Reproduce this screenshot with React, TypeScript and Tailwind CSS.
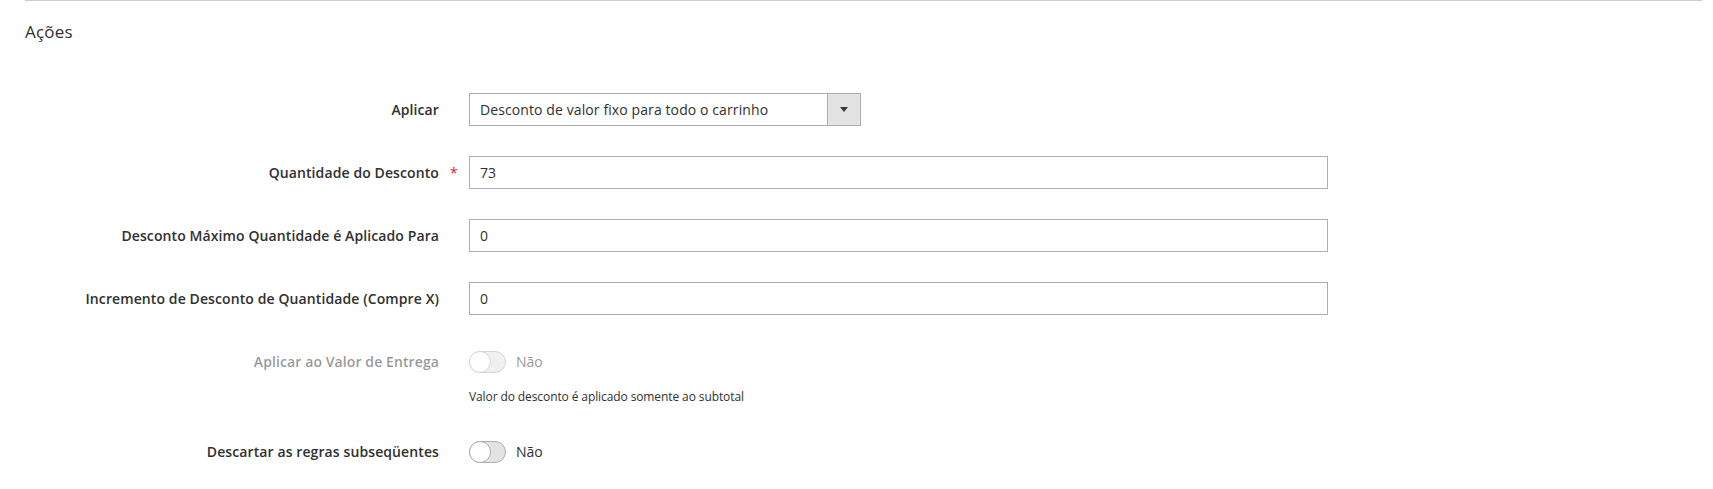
import React from "react";

function Toggle({ disabled }: { disabled?: boolean }) {
  return (
    <div className={`flex items-center gap-[10px] ${disabled ? "opacity-50" : ""}`}>
      <div className="relative h-[22px] w-[37px] rounded-full border border-[#adadad] bg-[#e3e3e3]">
        <div className="absolute -left-px -top-px h-[22px] w-[22px] rounded-full border border-[#adadad] bg-white" />
      </div>
      <span className="text-[14px] text-[#303030]">Não</span>
    </div>
  );
}

function Row({
  label,
  required,
  disabled,
  children,
}: {
  label: string;
  required?: boolean;
  disabled?: boolean;
  children: React.ReactNode;
}) {
  return (
    <div className="flex h-[33px] items-center">
      <div
        className={`w-[414px] text-right text-[14px] font-semibold tracking-[0.1px] ${
          disabled ? "text-[#303030]/50" : "text-[#303030]"
        }`}
      >
        {label}
      </div>
      <div className="w-[30px] pl-[11px] text-[14px] leading-none text-[#e22626]">
        {required ? "*" : ""}
      </div>
      {children}
    </div>
  );
}

function TextInput({ value }: { value: string }) {
  return (
    <div className="flex h-[33px] w-[859px] items-center border border-[#adadad] bg-white px-[10px] text-[14px] text-[#303030]">
      {value}
    </div>
  );
}

export default function App() {
  return (
    <div className="min-h-[489px] bg-white" style={{ fontFamily: '"Open Sans", sans-serif' }}>
      <div className="ml-[25px] mr-[11px] border-t border-[#cccccc] pt-[21px]">
        <h2 className="text-[17px] leading-[20px] font-normal tracking-[0.2px] text-[#303030]">Ações</h2>
      </div>

      <div className="ml-[25px] mt-[51px] flex flex-col gap-[30px]">
        <Row label="Aplicar">
          <div className="flex h-[33px] w-[392px] items-stretch border border-[#adadad] bg-white text-[14px] tracking-[0.1px] text-[#303030]">
            <div className="flex flex-1 items-center px-[10px]">Desconto de valor fixo para todo o carrinho</div>
            <div className="flex w-[33px] items-center justify-center border-l border-[#adadad] bg-[#e3e3e3]">
              <svg width="8" height="5" viewBox="0 0 8 5" className="-mt-[1px]">
                <path d="M0 0h8L4 5z" fill="#41362f" />
              </svg>
            </div>
          </div>
        </Row>

        <Row label="Quantidade do Desconto" required>
          <TextInput value="73" />
        </Row>

        <Row label="Desconto Máximo Quantidade é Aplicado Para">
          <TextInput value="0" />
        </Row>

        <Row label="Incremento de Desconto de Quantidade (Compre X)">
          <TextInput value="0" />
        </Row>

        <div className="flex flex-col">
          <Row label="Aplicar ao Valor de Entrega" disabled>
            <Toggle disabled />
          </Row>
          <div className="ml-[444px] mt-[11px] text-[12px] leading-[16px] tracking-[-0.1px] text-[#303030]">
            Valor do desconto é aplicado somente ao subtotal
          </div>
        </div>

        <Row label="Descartar as regras subseqüentes">
          <Toggle />
        </Row>
      </div>
    </div>
  );
}
